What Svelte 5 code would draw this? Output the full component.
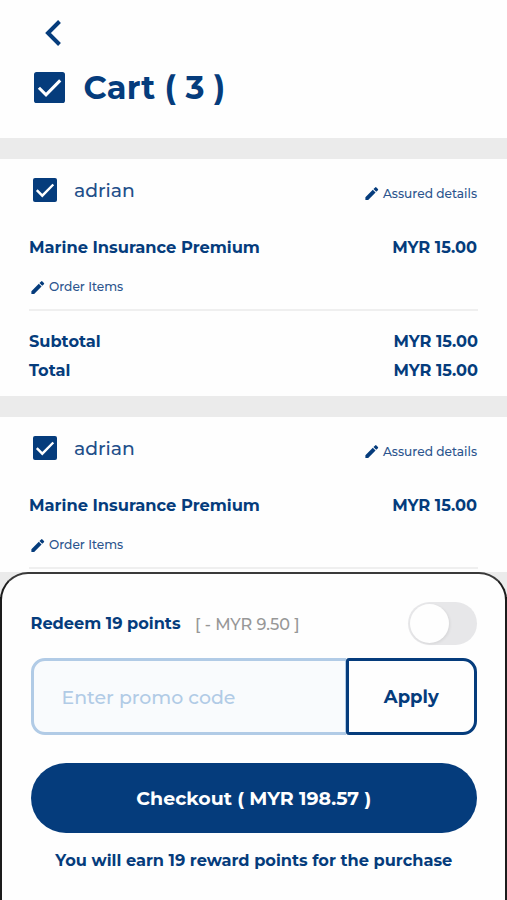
<script>
    const orders = [
        { id: 1, name: "adrian", product: "Marine Insurance Premium", price: "MYR 15.00" },
        { id: 2, name: "adrian", product: "Marine Insurance Premium", price: "MYR 15.00" },
    ];

    let promo = $state("");
    let redeem = $state(false);
</script>

{#snippet check(size)}
    <svg class="check {size}" viewBox="0 0 24 24">
        <rect width="24" height="24" rx="2" />
        <path d="M3.800 12.200l5.500 5.500L20.300 6.500" />
    </svg>
{/snippet}

{#snippet pencil()}
    <svg class="pencil" viewBox="0 0 14 14">
        <path d="M1.300 10.500V13h2.600l6.900-7-2.600-2.600zM13 4a.9.900 0 0 0 0-1.200L11.600 1.300a.9.900 0 0 0-1.200 0L8.800 2.800l2.600 2.600z" />
    </svg>
{/snippet}

<div class="screen">
    <main>
        <header>
            <svg class="back" viewBox="0 0 16 26"><path d="M14.500 1.500L3 13l11.500 11.500" /></svg>
            <div class="title">
                {@render check("large")}
                <h1>Cart ( 3 )</h1>
            </div>
        </header>

        {#each orders as order (order.id)}
            <section>
                <div class="owner">
                    {@render check("small")}
                    <span class="name">{order.name}</span>
                    <span class="edit assured">{@render pencil()}<span>Assured details</span></span>
                </div>
                <div class="row product">
                    <span>{order.product}</span>
                    <span>{order.price}</span>
                </div>
                <div class="edit items">{@render pencil()}<span>Order Items</span></div>
                <div class="totals">
                    <div class="row"><span>Subtotal</span><span>{order.price}</span></div>
                    <div class="row"><span>Total</span><span>{order.price}</span></div>
                </div>
            </section>
        {/each}
    </main>

    <div class="sheet-wrap">
        <div class="sheet">
            <div class="redeem">
                <span class="points">Redeem 19 points</span>
                <span class="value">[ - MYR 9.50 ]</span>
                <button class="toggle" class:on={redeem} aria-label="Redeem points" onclick={() => (redeem = !redeem)}>
                    <span class="knob"></span>
                </button>
            </div>
            <div class="promo">
                <input placeholder="Enter promo code" bind:value={promo} />
                <button class="apply">Apply</button>
            </div>
            <button class="checkout">Checkout ( MYR 198.57 )</button>
            <p class="earn">You will earn 19 reward points for the purchase</p>
        </div>
    </div>
</div>

<style>
:global(body) {
    background: #fff;
}

.screen {
    --blue: #053c7c;
    display: flex;
    flex-direction: column;
    width: 507px;
    height: 900px;
    overflow: hidden;
    background: #fefefe;
    color: var(--blue);
    font-family: Montserrat, Inter, sans-serif;
    font-size: 16.200px;
    font-weight: 700;
}

.screen * {
    box-sizing: border-box;
}

button, input {
    font: inherit;
    color: inherit;
    padding: 0;
    margin: 0;
}

main {
    height: 572px;
    overflow: hidden;
}

header {
    height: 138px;
    padding: 20px 34px 0;
}

.back {
    display: block;
    width: 16px;
    height: 26px;
    margin-left: 11px;
    fill: none;
    stroke: var(--blue);
    stroke-width: 4;
}

.title {
    display: flex;
    align-items: center;
    height: 40px;
    margin-top: 21px;
}

h1 {
    margin: 2px 0 0 18.500px;
    font-size: 32px;
    line-height: 40px;
    letter-spacing: 0.2px;
}

.check {
    flex: none;
}

.check rect {
    fill: var(--blue);
}

.check path {
    fill: none;
    stroke: #fff;
    stroke-width: 2.400;
}

.check.large {
    width: 31px;
    height: 31px;
}

.check.small {
    width: 24px;
    height: 24px;
}

section {
    height: 258px;
    padding: 19px 29px 0;
    border-top: 21px solid #ebebeb;
}

.owner {
    display: flex;
    align-items: center;
    height: 24px;
    padding-left: 4px;
}

.name {
    margin-left: 17px;
    color: #234f8a;
    font-size: 18.800px;
    font-weight: 500;
}

.edit {
    display: flex;
    align-items: center;
    gap: 4px;
    font-size: 12.200px;
    font-weight: 500;
    line-height: 16px;
}

.edit span {
    color: #2b548d;
}

.assured {
    margin: 7px 1px 0 auto;
}

.pencil {
    width: 15px;
    height: 15px;
    fill: var(--blue);
}

.row {
    display: flex;
    justify-content: space-between;
    line-height: 20px;
}

.product {
    margin-top: 35px;
    padding-right: 1px;
    font-size: 16.250px;
}

.items {
    margin-top: 22px;
    padding-left: 1px;
}

.totals {
    display: flex;
    flex-direction: column;
    gap: 9px;
    margin-top: 14px;
    padding-top: 20px;
    border-top: 2px solid #efefef;
}

.sheet-wrap {
    height: 328px;
    background: linear-gradient(#ebebeb 25px, #000 25px);
}

.sheet {
    height: 330px;
    padding: 27px 28px 0 28.500px;
    background: #fefefe;
    border: 2px solid #1c1c1c;
    border-top-color: #3a3a3a;
    border-radius: 28px 28px 0 0;
}

.redeem {
    display: flex;
    align-items: center;
    height: 44px;
}

.value {
    margin: 1px 0 0 14.500px;
    color: #979797;
    font-size: 16.100px;
    font-weight: 500;
}

.toggle {
    width: 69px;
    height: 43px;
    margin-left: auto;
    padding: 2px;
    border: none;
    border-radius: 22px;
    background: #e7e7e9;
}

.knob {
    display: block;
    width: 39px;
    height: 39px;
    border-radius: 50%;
    background: #fefefe;
    box-shadow: 1px 1px 3px rgba(0, 0, 0, 0.08);
}

.toggle.on {
    background: var(--blue);
}

.toggle.on .knob {
    margin-left: 26px;
}

.promo {
    display: flex;
    height: 77px;
    margin-top: 13px;
}

input {
    width: 315px;
    padding: 2px 0 0 28px;
    border: 3px solid #b1cbe6;
    border-right-width: 1px;
    border-radius: 14px 0 0 14px;
    background: #f9fbfd;
    font-size: 18.900px;
    font-weight: 500;
    outline: none;
}

input::placeholder {
    color: #b1cbe6;
    opacity: 1;
}

.apply {
    flex: 1;
    padding-top: 1px;
    border: 3px solid var(--blue);
    border-radius: 3px 14px 14px 3px;
    background: #fefefe;
    font-size: 18px;
}

.checkout {
    display: block;
    width: 446.500px;
    height: 70px;
    margin-top: 28px;
    padding-top: 1px;
    border: none;
    border-radius: 36px;
    background: var(--blue);
    color: #fff;
    font-size: 18.950px;
}

.earn {
    margin: 17px 0 0;
    text-align: center;
    line-height: 20px;
    font-size: 16.200px;
}
</style>
